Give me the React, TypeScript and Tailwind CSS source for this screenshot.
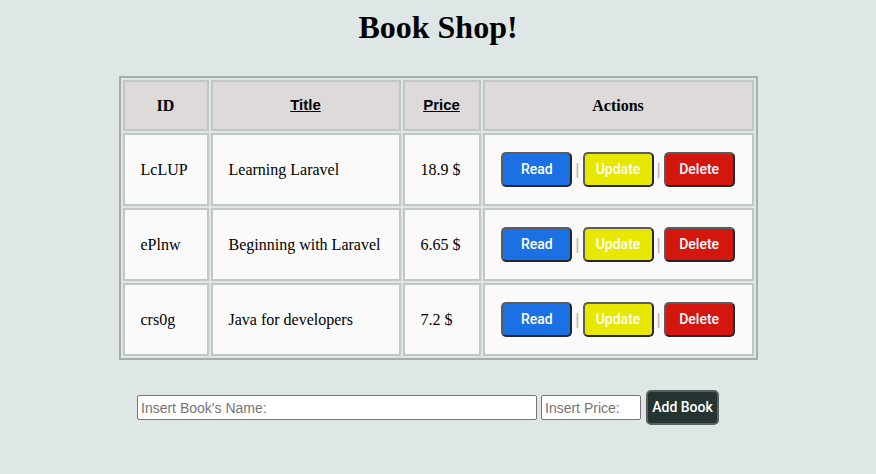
const books = [
  { id: "LcLUP", title: "Learning Laravel", price: "18.9 $" },
  { id: "ePlnw", title: "Beginning with Laravel", price: "6.65 $" },
  { id: "crs0g", title: "Java for developers", price: "7.2 $" },
]

function ActionButton({ label, color }: { label: string; color: string }) {
  return (
    <button
      className={`h-[35px] w-[71px] rounded-[5px] border-2 border-t-[#5c5c5c] border-l-[#5c5c5c] border-b-[#262626] border-r-[#262626] text-[14px] font-medium text-white font-['Roboto','Liberation_Sans',Arial,sans-serif] ${color}`}
    >
      {label}
    </button>
  )
}

export default function App() {
  const cell = "border-2 border-[#c3c6c6] px-4"
  return (
    <div className="min-h-[474px] w-full bg-[#dfe6e6] font-['Liberation_Serif','Times_New_Roman',serif] text-black">
      <h1 className="pt-[9px] text-center text-[32px] font-bold leading-[37px]">Book Shop!</h1>

      <table className="mx-auto mt-[30px] w-[639px] table-fixed border-separate border-spacing-[2px] border-2 border-[#a9acac] text-[16px]">
        <thead>
          <tr className="h-[51px] bg-[#dedad9]">
            <th className={`${cell} w-[86px] font-bold`}>ID</th>
            <th className={`${cell} w-[190px] font-['Liberation_Sans',Arial,sans-serif] text-[15px] font-bold underline`}>Title</th>
            <th className={`${cell} w-[78px] font-['Liberation_Sans',Arial,sans-serif] text-[15px] font-bold underline`}>Price</th>
            <th className={`${cell} font-bold`}>Actions</th>
          </tr>
        </thead>
        <tbody>
          {books.map((b) => (
            <tr key={b.id} className="h-[73px] bg-[#fafafa]">
              <td className={cell}>{b.id}</td>
              <td className={cell}>{b.title}</td>
              <td className={cell}>{b.price}</td>
              <td className={`${cell} px-0`}>
                <div className="flex items-center justify-center gap-[3px]">
                  <ActionButton label="Read" color="bg-[#1b70e3]" />
                  <span className="text-[#b0b0b0] font-['Liberation_Sans',Arial,sans-serif]">|</span>
                  <ActionButton label="Update" color="bg-[#e8e700]" />
                  <span className="text-[#b0b0b0] font-['Liberation_Sans',Arial,sans-serif]">|</span>
                  <ActionButton label="Delete" color="bg-[#d3170f]" />
                </div>
              </td>
            </tr>
          ))}
        </tbody>
      </table>

      <div className="mt-[30px] flex items-center pl-[137px] font-['Liberation_Sans',Arial,sans-serif]">
        <input
          className="h-[25px] w-[400px] rounded-[2px] border border-[#767676] bg-white px-[3px] text-[14px] placeholder:text-[#757575]"
          placeholder="Insert Book's Name:"
        />
        <input
          className="ml-[4px] h-[25px] w-[100px] rounded-[2px] border border-[#767676] bg-white px-[3px] text-[14px] placeholder:text-[#757575]"
          placeholder="Insert Price:"
        />
        <button className="ml-[5px] h-[35px] w-[73px] rounded-[5px] border-2 border-[#5a5e5e] bg-[#263333] font-['Roboto','Liberation_Sans',Arial,sans-serif] text-[14px] font-medium text-white">
          Add Book
        </button>
      </div>
    </div>
  )
}
